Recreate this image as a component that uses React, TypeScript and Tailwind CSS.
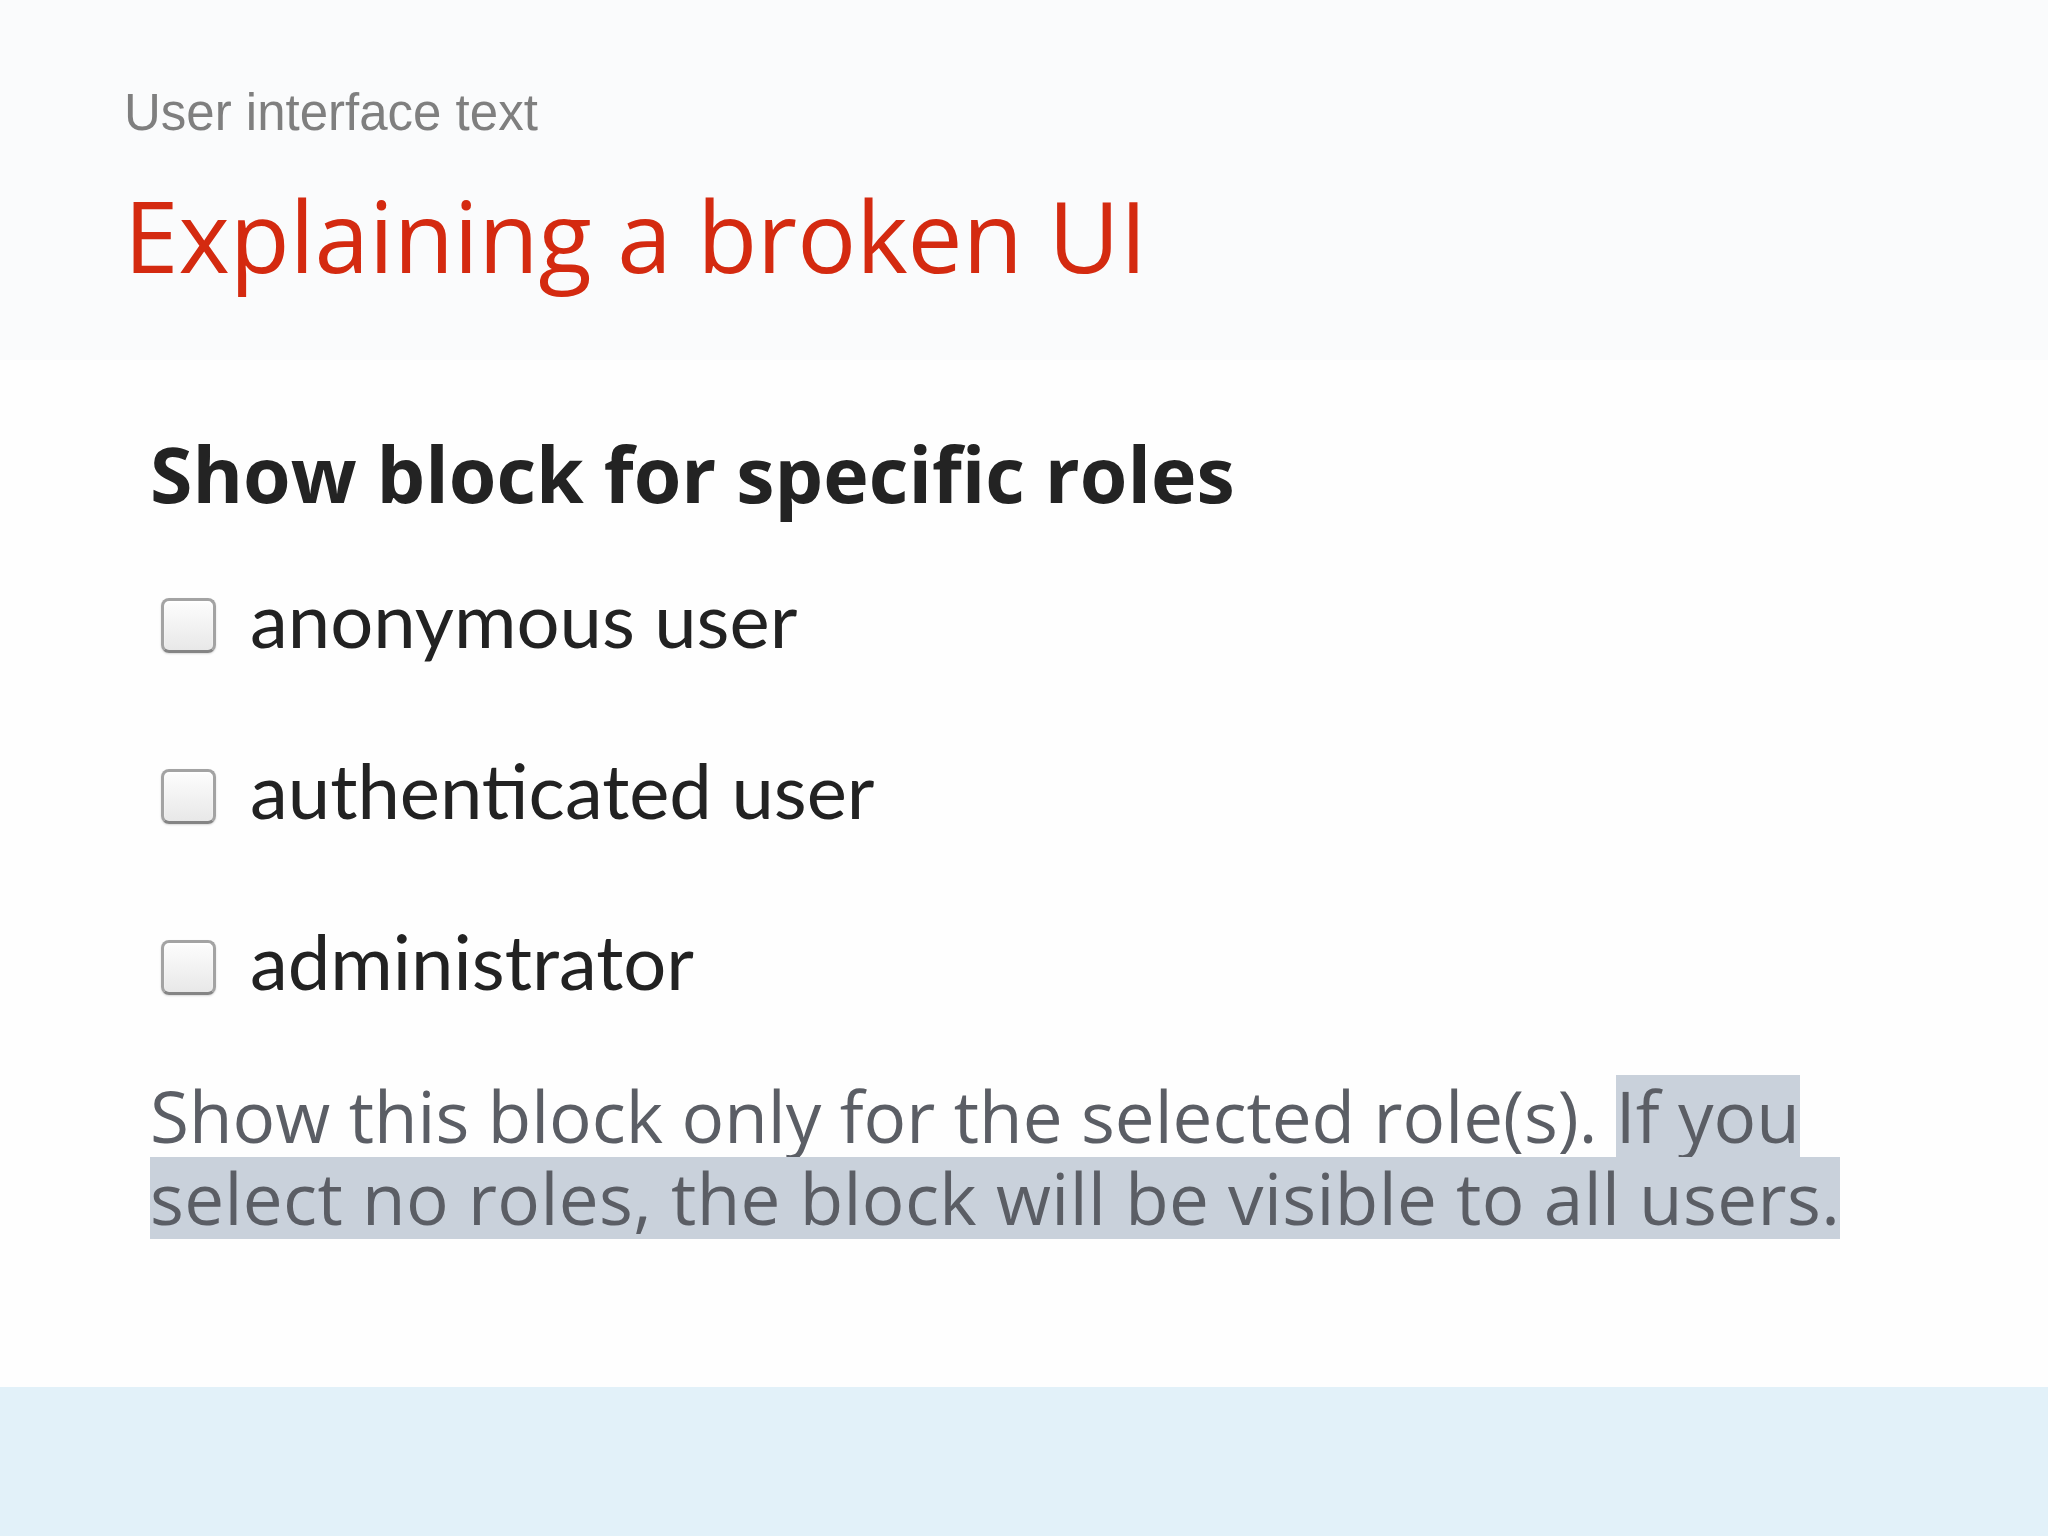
export default function App() {
  const roles = ["anonymous user", "authenticated user", "administrator"];
  return (
    <div className="w-[2048px] h-[1536px] flex flex-col bg-[#fefefe] overflow-hidden">
      <header className="h-[360px] shrink-0 bg-[#fafbfc] pl-[124px] pt-[87px]">
        <div className="text-[51px] leading-none text-[#7f7f7f] font-['Liberation_Sans',Arial,sans-serif]">
          User interface text
        </div>
        <h1 className="mt-[48px] text-[98px] leading-none text-[#d42a10] font-['Open_Sans',sans-serif]">
          Explaining a broken UI
        </h1>
      </header>
      <main className="flex-1 pl-[150px] pt-[75px]">
        <h2 className="text-[77px] leading-none font-bold text-[#232323] font-['Open_Sans',sans-serif]">
          Show block for specific roles
        </h2>
        <div className="mt-[69px] flex flex-col gap-[95px] font-['Lato',sans-serif]">
          {roles.map((r) => (
            <label key={r} className="flex items-start gap-[34px] pl-[11px]">
              <span className="mt-[17px] w-[55px] h-[55px] shrink-0 rounded-[8px] border-[3px] border-[#a3a3a3] border-b-[#858585] bg-linear-to-b from-[#fdfdfd] to-[#e8e8e8] shadow-[inset_0_2px_2px_rgba(255,255,255,0.9),0_1px_2px_rgba(0,0,0,0.15)]" />
              <span className="text-[76px] leading-none text-[#222222]">{r}</span>
            </label>
          ))}
        </div>
        <div className="mt-[76px] text-[71px] leading-[82px] text-[#5b5e65] font-['Open_Sans',sans-serif]">
          <div>
            Show this block only for the selected role(s).{" "}
            <span className="inline-block bg-[#c9d1db]">If you</span>
          </div>
          <div>
            <span className="inline-block bg-[#c9d1db] tracking-[0.4px]">
              select no roles, the block will be visible to all users.
            </span>
          </div>
        </div>
      </main>
      <footer className="h-[149px] shrink-0 bg-[#e2f1f9]" />
    </div>
  );
}
